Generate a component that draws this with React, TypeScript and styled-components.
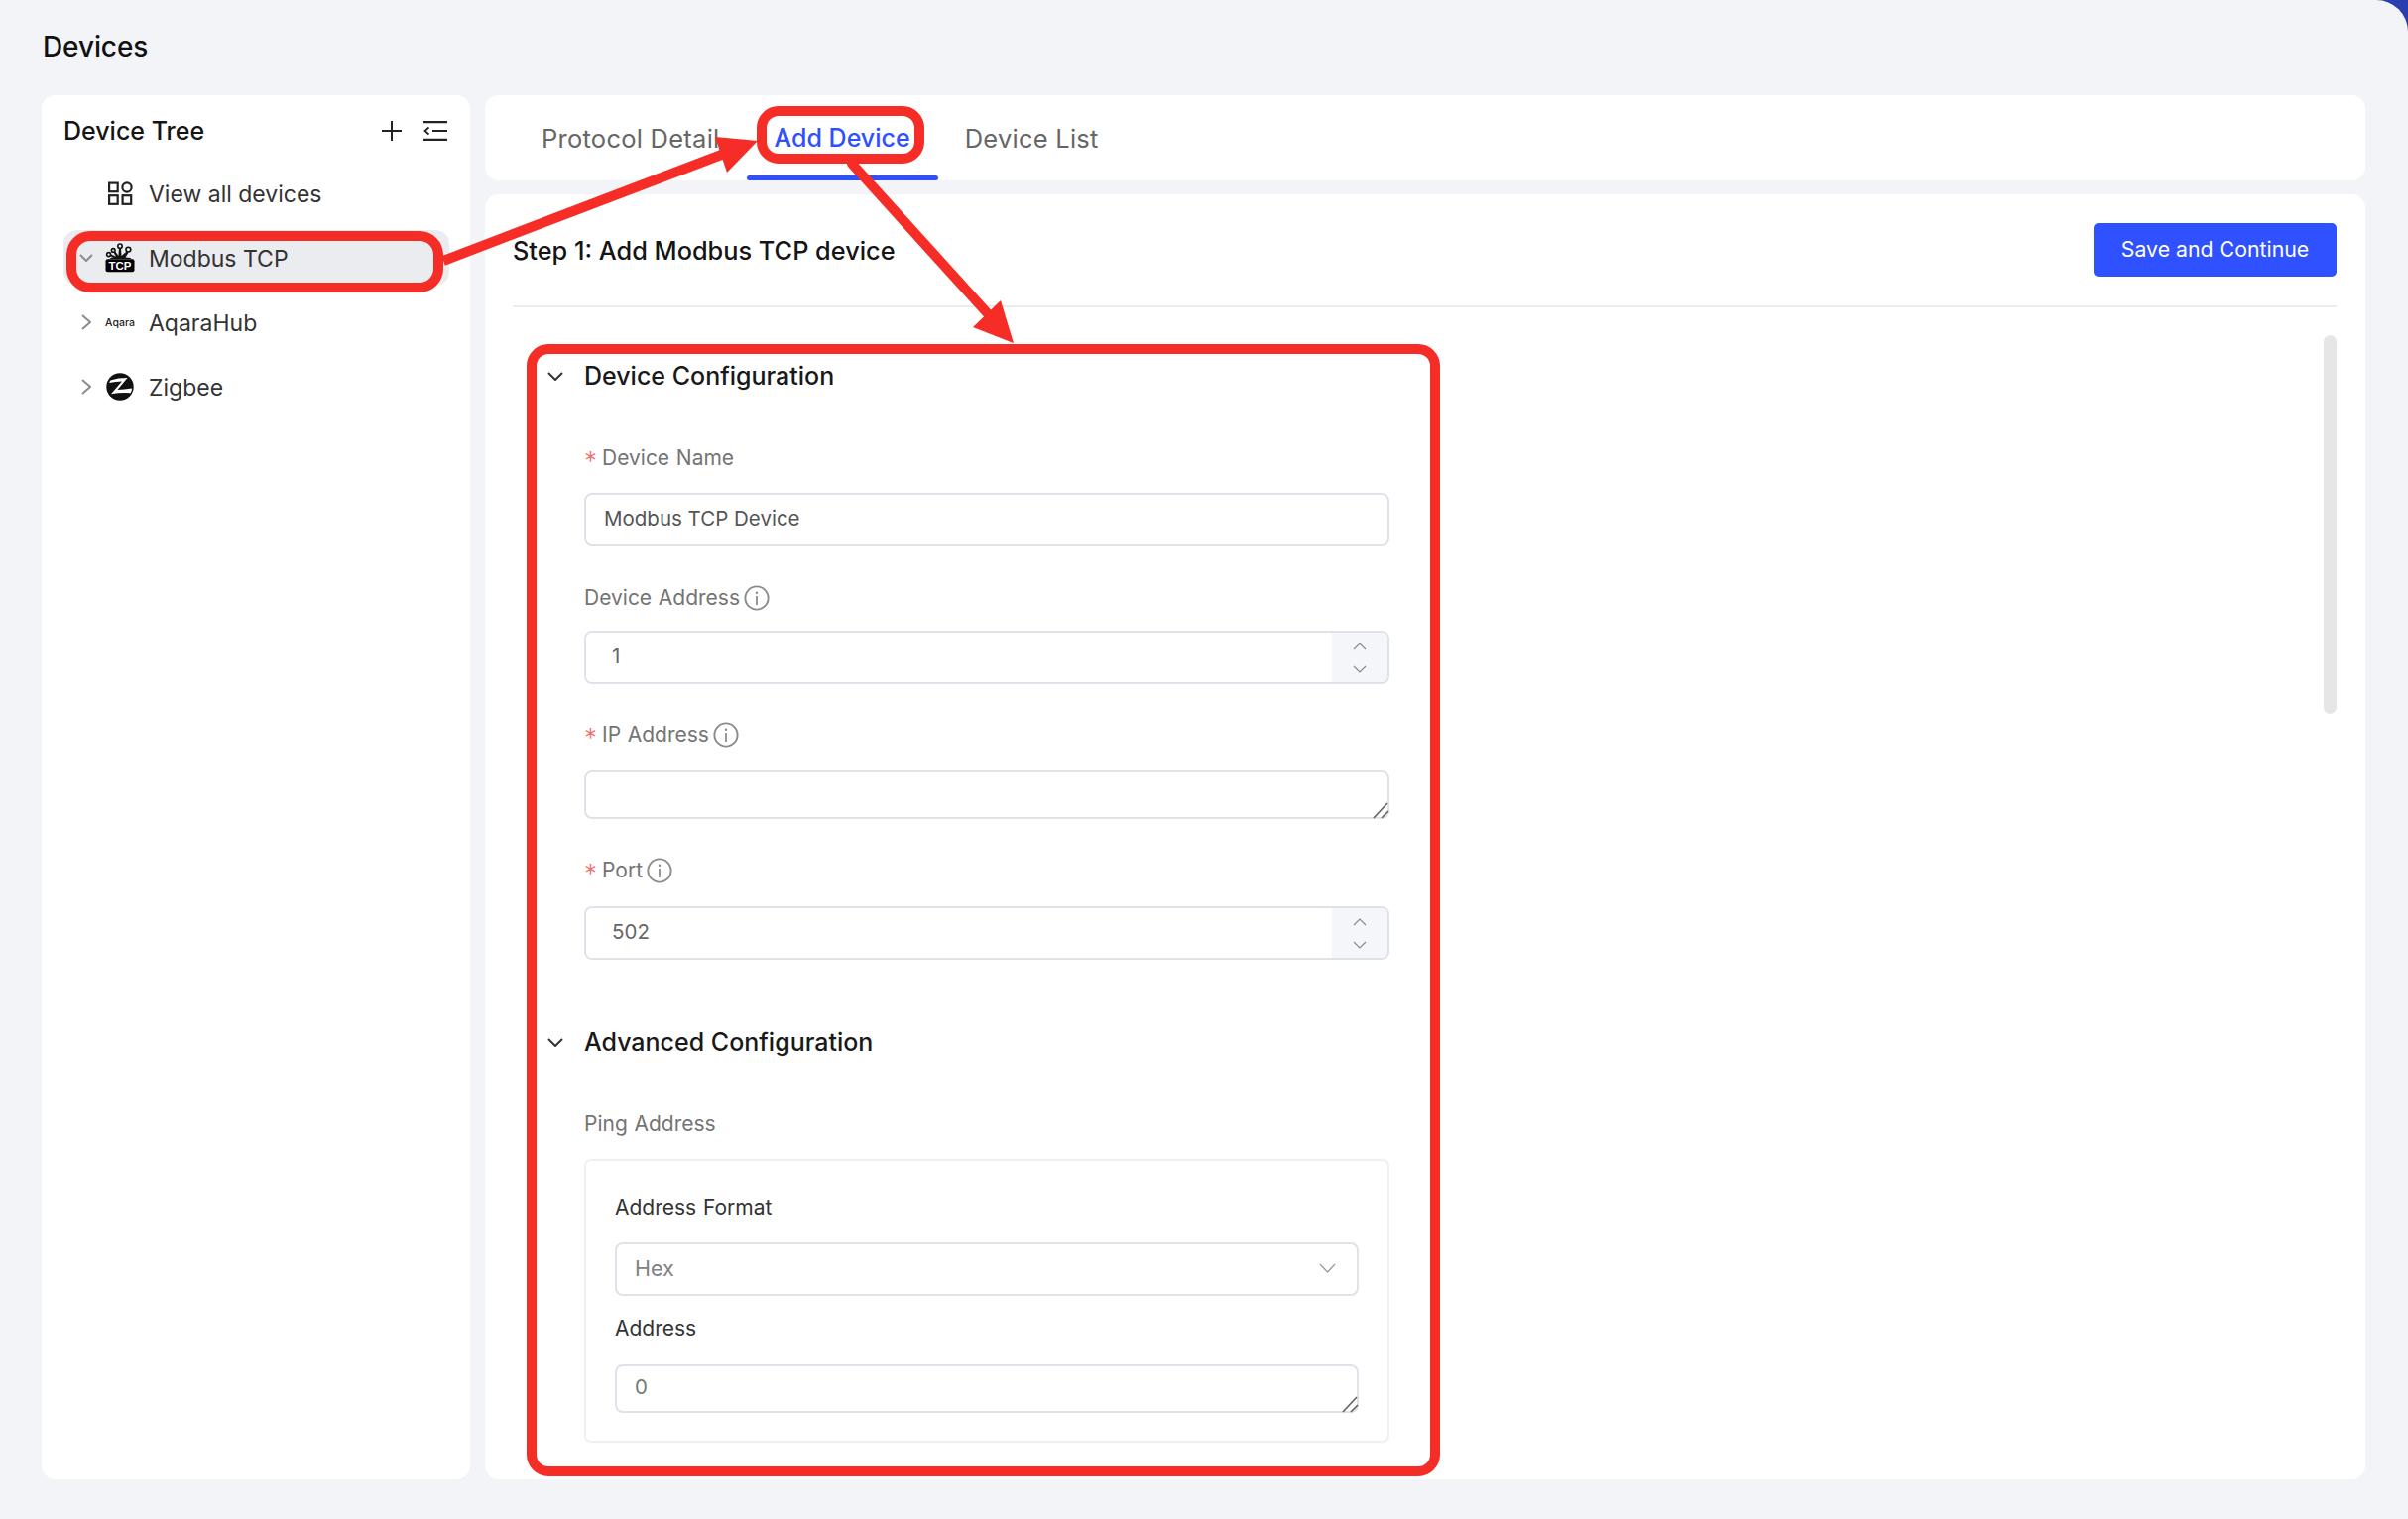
import React from "react";
import styled, { createGlobalStyle } from "styled-components";

const Global = createGlobalStyle`
  html, body { margin: 0; padding: 0; background: #2a3eb1; }
  body { font-family: Inter, "Noto Sans", "Liberation Sans", sans-serif; }
  * { box-sizing: border-box; }
`;

const Page = styled.div`
  position: relative;
  width: 2428px;
  height: 1532px;
  padding: 0 43px 40px 42px;
  background: #f2f4f8;
  border-top-right-radius: 32px;
  overflow: hidden;
  display: flex;
  flex-direction: column;
`;
const PageHeader = styled.header`
  height: 96px;
  flex: none;
  display: flex;
  align-items: center;
  padding-left: 1px;
  padding-bottom: 2px;
`;
const PageTitle = styled.h1`
  margin: 0;
  font-size: 28px;
  font-weight: 500;
  color: #111;
  letter-spacing: -0.1px;
`;
const Body = styled.div`
  flex: 1;
  display: flex;
  gap: 15px;
  min-height: 0;
`;
const Sidebar = styled.aside`
  width: 432px;
  flex: none;
  background: #fff;
  border-radius: 14px;
  padding: 0 21px 0 22px;
`;
const SideHeader = styled.div`
  height: 71px;
  display: flex;
  align-items: center;
  justify-content: space-between;
  padding-right: 2px;
`;
const SideTitle = styled.div`
  font-size: 25px;
  font-weight: 500;
  color: #151515;
`;
const SideTools = styled.div`
  display: flex;
  align-items: center;
  gap: 22px;
`;
const TreeList = styled.div`
  display: flex;
  flex-direction: column;
  gap: 9px;
`;
const TreeRow = styled.div<{ $active?: boolean }>`
  height: 56px;
  display: grid;
  grid-template-columns: 42px 30px 1fr;
  align-items: center;
  border-radius: 14px;
  background: ${(p) => (p.$active ? "#ebecf0" : "transparent")};
  color: #333;
  font-size: 23px;
`;
const Caret = styled.span`
  display: flex;
  justify-content: center;
  align-items: center;
  padding-left: 4px;
`;
const TreeIcon = styled.span`
  display: flex;
  justify-content: center;
  align-items: center;
`;
const TreeLabel = styled.span`
  padding: 1px 0 0 14px;
`;
const AqaraMark = styled.span`
  font-size: 10.5px;
  font-weight: 500;
  color: #222;
`;
const Main = styled.main`
  flex: 1;
  min-width: 0;
  display: flex;
  flex-direction: column;
  gap: 14px;
`;
const TabBar = styled.nav`
  height: 86px;
  flex: none;
  background: #fff;
  border-radius: 14px;
  display: flex;
  padding-left: 30px;
`;
const Tab = styled.div<{ $active?: boolean }>`
  position: relative;
  display: flex;
  align-items: center;
  padding: 0 ${(p) => (p.$active ? 28 : 27)}px;
  font-size: ${(p) => (p.$active ? 25 : 25.5)}px;
  letter-spacing: ${(p) => (p.$active ? 0 : 0.25)}px;
  font-weight: ${(p) => (p.$active ? 500 : 400)};
  color: ${(p) => (p.$active ? "#2f50ff" : "#666")};
  &::after {
    content: "";
    display: ${(p) => (p.$active ? "block" : "none")};
    position: absolute;
    left: 0;
    right: 0;
    bottom: 0;
    height: 5px;
    border-radius: 3px;
    background: #2f50ff;
  }
`;
const Panel = styled.section`
  flex: 1;
  min-height: 0;
  background: #fff;
  border-radius: 14px;
  padding: 0 29px 0 28px;
  display: flex;
  flex-direction: column;
  overflow: hidden;
`;
const PanelHead = styled.div`
  height: 114px;
  flex: none;
  display: flex;
  align-items: center;
  justify-content: space-between;
  border-bottom: 2px solid #ececee;
`;
const StepTitle = styled.h2`
  margin: 0;
  font-size: 25.3px;
  font-weight: 500;
  color: #151515;
`;
const PrimaryButton = styled.button`
  width: 245px;
  height: 54px;
  border: none;
  border-radius: 5px;
  background: #3051ff;
  color: #fff;
  font-family: inherit;
  font-size: 21.3px;
  padding: 0 0 2px;
`;
const Scroller = styled.div`
  position: relative;
  flex: 1;
  min-height: 0;
  padding-top: 49px;
`;
const ScrollThumb = styled.div`
  position: absolute;
  right: 0;
  top: 28px;
  width: 13px;
  height: 382px;
  border-radius: 7px;
  background: #e6e6e6;
`;
const SectionHead = styled.div<{ $top?: number }>`
  height: 40px;
  margin-top: ${(p) => p.$top ?? 0}px;
  display: grid;
  grid-template-columns: 72px 1fr;
  align-items: center;
`;
const SectionChevron = styled.span`
  display: flex;
  justify-content: flex-start;
  padding-left: 35px;
`;
const SectionTitle = styled.div`
  font-size: 25px;
  font-weight: 500;
  color: #191919;
`;
const Form = styled.div`
  width: 812px;
  margin-left: 72px;
`;
const Label = styled.div<{ $top: number; $after: number; $dark?: boolean }>`
  height: 34px;
  margin-top: ${(p) => p.$top}px;
  margin-bottom: ${(p) => p.$after}px;
  padding-bottom: 3px;
  display: flex;
  align-items: center;
  font-size: 21px;
  word-spacing: 0.8px;
  color: ${(p) => (p.$dark ? "#333" : "#747474")};
`;
const Star = styled.span`
  color: #f36f6f;
  width: 18px;
  flex: none;
  font-size: 26px;
  font-weight: 300;
  line-height: 26px;
  height: 20px;
  margin-right: 0;
`;
const InfoIcon = styled.svg`
  margin-left: 4px;
  flex: none;
`;
const TextField = styled.input`
  display: block;
  width: 100%;
  height: 54px;
  padding: 0 18px 3px;
  border: 2px solid #e0e2e9;
  border-radius: 8px;
  font-family: inherit;
  font-size: 20.5px;
  color: #555;
  background: #fff;
  outline: none;
`;
const NumberWrap = styled.div`
  display: flex;
  height: 54px;
  border: 2px solid #e0e2e9;
  border-radius: 8px;
  overflow: hidden;
`;
const NumberInput = styled.input`
  flex: 1;
  min-width: 0;
  border: none;
  outline: none;
  padding: 0 26px 3px;
  font-family: inherit;
  font-size: 20.5px;
  color: #666;
  background: #fff;
`;
const Spin = styled.div`
  width: 56px;
  flex: none;
  background: #f5f6fa;
  display: flex;
  flex-direction: column;
  align-items: center;
  justify-content: center;
  gap: 15px;
`;
const AreaWrap = styled.div`
  position: relative;
  height: 49px;
`;
const Area = styled.textarea`
  display: block;
  width: 100%;
  height: 100%;
  resize: none;
  padding: 7px 18px;
  border: 2px solid #e0e2e9;
  border-radius: 8px;
  font-family: inherit;
  font-size: 20.5px;
  line-height: 28px;
  color: #777;
  background: #fff;
  outline: none;
`;
const Grip = styled.svg`
  position: absolute;
  right: 0;
  bottom: 0;
`;
const SubBox = styled.div`
  border: 2px solid #eff0f3;
  border-radius: 7px;
  padding: 31px 29px 28px;
  height: 286px;
`;
const SelectBox = styled.div`
  height: 54px;
  border: 2px solid #e0e2e9;
  border-radius: 8px;
  display: flex;
  align-items: center;
  justify-content: space-between;
  padding: 0 21px 3px 18px;
  font-size: 21.5px;
  color: #808080;
`;
const Overlay = styled.svg`
  position: absolute;
  left: 0;
  top: 0;
  pointer-events: none;
`;
const ModbusText = styled.text`
  font-size: 11.5px;
  font-weight: 700;
  fill: #fff;
  font-family: "Liberation Sans", sans-serif;
`;

const Down = ({ w = 14, h = 8, c = "#8c8c8c", s = 2 }: { w?: number; h?: number; c?: string; s?: number }) => (
  <svg width={w} height={h} viewBox={`0 0 ${w} ${h}`} fill="none">
    <polyline points={`1,1 ${w / 2},${h - 1} ${w - 1},1`} stroke={c} strokeWidth={s} />
  </svg>
);
const Up = () => (
  <svg width={14} height={8} viewBox="0 0 14 8" fill="none">
    <polyline points="1,7 7,1 13,7" stroke="#8a8a8a" strokeWidth={1.2} />
  </svg>
);
const Right = () => (
  <svg width={10} height={16} viewBox="0 0 10 16" fill="none">
    <polyline points="1,1 9,8 1,15" stroke="#8c8c8c" strokeWidth={2} />
  </svg>
);
const Info = () => (
  <InfoIcon width={26} height={26} viewBox="0 0 26 26" fill="none">
    <circle cx="13" cy="13" r="11.6" stroke="#8c8c8c" strokeWidth="1.9" />
    <circle cx="13" cy="7.8" r="1.2" fill="#8c8c8c" />
    <rect x="12.1" y="11" width="1.8" height="9" fill="#8c8c8c" />
  </InfoIcon>
);
const Spinner = () => (
  <Spin>
    <Up />
    <Down c="#8a8a8a" s={1.2} />
  </Spin>
);
const ResizeGrip = () => (
  <Grip width={18} height={18} viewBox="0 0 18 18" fill="none">
    <path d="M2 17 16 2M10 17 17 10" stroke="#666" strokeWidth="1.7" />
  </Grip>
);
const PlusIcon = () => (
  <svg width={20} height={20} viewBox="0 0 20 20" fill="none">
    <path d="M10 0v20M0 10h20" stroke="#222" strokeWidth="2" />
  </svg>
);
const FoldIcon = () => (
  <svg width={24} height={20} viewBox="0 0 24 20" fill="none">
    <path d="M0 1.2h24M9 10h15M0 18.8h24" stroke="#222" strokeWidth="2.2" />
    <path d="M5.5 6.5 1.5 10l4 3.5" stroke="#222" strokeWidth="1.8" />
  </svg>
);
const GridIcon = () => (
  <svg width={25} height={24} viewBox="0 0 25 24" fill="none" stroke="#222" strokeWidth="2.2">
    <rect x="1.1" y="1.6" width="8.6" height="8.6" />
    <circle cx="19" cy="6" r="4.6" />
    <rect x="1.1" y="14.2" width="8.6" height="8.6" />
    <rect x="14.6" y="14.2" width="8.6" height="8.6" />
  </svg>
);
const ModbusIcon = () => (
  <svg width={30} height={30} viewBox="0 0 30 30">
    <g fill="none" stroke="#111" strokeWidth="1.6">
      <circle cx="15" cy="3.2" r="2.2" />
      <circle cx="8.2" cy="7.4" r="1.8" />
      <circle cx="3.6" cy="11.6" r="2" />
      <circle cx="23.4" cy="6.6" r="2.4" />
    </g>
    <path d="M14 5.5h2L16.5 13l5.5-4.8 1.5 1.6L20.5 14.6l5 0.4L26.5 16H4.5l2-1.4 2.5-.2L4.8 13.2 6 11.6l5 2.2L8.6 9.8l1.8-1L13.4 13z" fill="#111" />
    <rect x="0.5" y="16.2" width="29" height="13" rx="2" fill="#000" />
    <ModbusText x="15" y="27" textAnchor="middle">TCP</ModbusText>
  </svg>
);
const ZigbeeIcon = () => (
  <svg width={28} height={28} viewBox="0 0 28 28">
    <circle cx="14" cy="14" r="13.7" fill="#111" />
    <path d="M4.4 7.4 Q12 5 21.5 5 L11.5 17 Q18 17 26 15.6 Q26.2 18 24.6 20.2 Q14 19.6 5 21.2 L16 8.4 Q10 8.4 3 10z" fill="#fff" />
  </svg>
);

const Annotations = () => (
  <Overlay width={2428} height={1532} viewBox="0 0 2428 1532" fill="none">
    <g stroke="#f52d26" strokeWidth="10">
      <rect x="72" y="238" width="370" height="52" rx="19" />
      <rect x="768" y="112" width="159" height="48" rx="17" />
      <rect x="536" y="352" width="911" height="1132" rx="17" />
      <path d="M447 263 L730 155" />
      <path d="M859 165 L1001 322" strokeLinecap="round" />
    </g>
    <path d="M764 142 L721 138 L733 174z" fill="#f52d26" />
    <path d="M1022 346 L1009 303 L981 330z" fill="#f52d26" />
  </Overlay>
);

export default function App() {
  return (
    <Page>
      <Global />
      <PageHeader>
        <PageTitle>Devices</PageTitle>
      </PageHeader>
      <Body>
        <Sidebar>
          <SideHeader>
            <SideTitle>Device Tree</SideTitle>
            <SideTools>
              <PlusIcon />
              <FoldIcon />
            </SideTools>
          </SideHeader>
          <TreeList>
            <TreeRow>
              <Caret />
              <TreeIcon><GridIcon /></TreeIcon>
              <TreeLabel>View all devices</TreeLabel>
            </TreeRow>
            <TreeRow $active>
              <Caret><Down /></Caret>
              <TreeIcon><ModbusIcon /></TreeIcon>
              <TreeLabel>Modbus TCP</TreeLabel>
            </TreeRow>
            <TreeRow>
              <Caret><Right /></Caret>
              <TreeIcon><AqaraMark>Aqara</AqaraMark></TreeIcon>
              <TreeLabel>AqaraHub</TreeLabel>
            </TreeRow>
            <TreeRow>
              <Caret><Right /></Caret>
              <TreeIcon><ZigbeeIcon /></TreeIcon>
              <TreeLabel>Zigbee</TreeLabel>
            </TreeRow>
          </TreeList>
        </Sidebar>
        <Main>
          <TabBar>
            <Tab>Protocol Detail</Tab>
            <Tab $active>Add Device</Tab>
            <Tab>Device List</Tab>
          </TabBar>
          <Panel>
            <PanelHead>
              <StepTitle>Step 1: Add Modbus TCP device</StepTitle>
              <PrimaryButton>Save and Continue</PrimaryButton>
            </PanelHead>
            <Scroller>
              <ScrollThumb />
              <SectionHead>
                <SectionChevron><Down w={16} h={9} c="#333" /></SectionChevron>
                <SectionTitle>Device Configuration</SectionTitle>
              </SectionHead>
              <Form>
                <Label $top={47} $after={17}><Star>*</Star>Device Name</Label>
                <TextField defaultValue="Modbus TCP Device" />
                <Label $top={36} $after={15}>Device Address<Info /></Label>
                <NumberWrap>
                  <NumberInput defaultValue="1" />
                  <Spinner />
                </NumberWrap>
                <Label $top={35} $after={18}><Star>*</Star>IP Address<Info /></Label>
                <AreaWrap>
                  <Area />
                  <ResizeGrip />
                </AreaWrap>
                <Label $top={36} $after={18}><Star>*</Star>Port<Info /></Label>
                <NumberWrap>
                  <NumberInput defaultValue="502" />
                  <Spinner />
                </NumberWrap>
              </Form>
              <SectionHead $top={63}>
                <SectionChevron><Down w={16} h={9} c="#333" /></SectionChevron>
                <SectionTitle>Advanced Configuration</SectionTitle>
              </SectionHead>
              <Form>
                <Label $top={47} $after={17}>Ping Address</Label>
                <SubBox>
                  <Label $top={0} $after={17} $dark>Address Format</Label>
                  <SelectBox>
                    Hex
                    <Down w={17} h={10} c="#9a9a9a" s={1.2} />
                  </SelectBox>
                  <Label $top={17} $after={18} $dark>Address</Label>
                  <AreaWrap>
                    <Area defaultValue="0" />
                    <ResizeGrip />
                  </AreaWrap>
                </SubBox>
              </Form>
            </Scroller>
          </Panel>
        </Main>
      </Body>
      <Annotations />
    </Page>
  );
}
